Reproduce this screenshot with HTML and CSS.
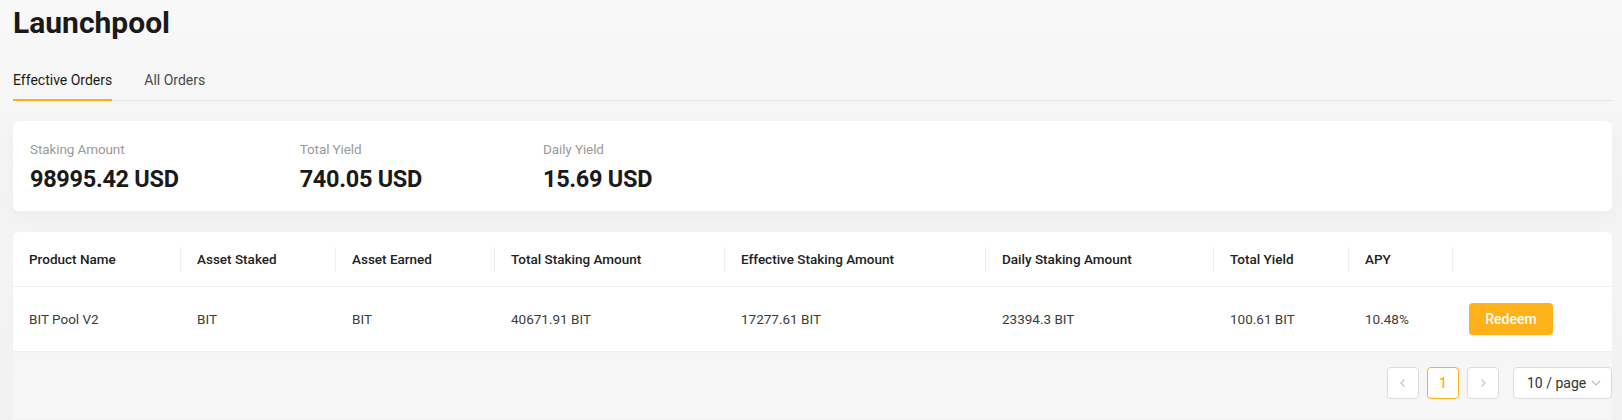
FILE: index.html
```html
<!DOCTYPE html>
<html lang="en">
<head>
<meta charset="utf-8">
<title>Launchpool</title>
<link rel="stylesheet" href="styles.css">
</head>
<body>
<div class="page">
  <h1 class="title">Launchpool</h1>
  <div class="tabs">
    <div class="tab active">Effective Orders</div>
    <div class="tab">All Orders</div>
  </div>

  <div class="summary">
    <div class="stat">
      <div class="stat-label">Staking Amount</div>
      <div class="stat-value">98995.42 USD</div>
    </div>
    <div class="stat">
      <div class="stat-label">Total Yield</div>
      <div class="stat-value">740.05 USD</div>
    </div>
    <div class="stat">
      <div class="stat-label">Daily Yield</div>
      <div class="stat-value">15.69 USD</div>
    </div>
  </div>

  <div class="orders">
    <table class="table">
      <colgroup>
        <col class="c1"><col class="c2"><col class="c3"><col class="c4"><col class="c5"><col class="c6"><col class="c7"><col class="c8"><col>
      </colgroup>
      <thead>
        <tr>
          <th>Product Name</th>
          <th>Asset Staked</th>
          <th>Asset Earned</th>
          <th>Total Staking Amount</th>
          <th>Effective Staking Amount</th>
          <th>Daily Staking Amount</th>
          <th>Total Yield</th>
          <th>APY</th>
          <th class="last"></th>
        </tr>
      </thead>
      <tbody>
        <tr>
          <td>BIT Pool V2</td>
          <td>BIT</td>
          <td>BIT</td>
          <td>40671.91 BIT</td>
          <td>17277.61 BIT</td>
          <td>23394.3 BIT</td>
          <td>100.61 BIT</td>
          <td>10.48%</td>
          <td><button class="redeem">Redeem</button></td>
        </tr>
      </tbody>
    </table>

    <div class="pagination">
      <div class="pg-btn disabled">
        <svg width="12" height="12" viewBox="0 0 12 12"><path d="M7.5 2.5 4 6l3.5 3.5" fill="none" stroke="#c4c4c4" stroke-width="1.1"/></svg>
      </div>
      <div class="pg-btn current">1</div>
      <div class="pg-btn disabled">
        <svg width="12" height="12" viewBox="0 0 12 12"><path d="M4.5 2.5 8 6 4.5 9.5" fill="none" stroke="#c4c4c4" stroke-width="1.1"/></svg>
      </div>
      <div class="pg-select">
        <span>10 / page</span>
        <svg width="12" height="12" viewBox="0 0 12 12"><path d="M2 4l4 4 4-4" fill="none" stroke="#bdbdbd" stroke-width="1.1"/></svg>
      </div>
    </div>
  </div>
</div>
</body>
</html>
```

FILE: styles.css
```css
* { box-sizing: border-box; }
html, body {
  margin: 0;
  padding: 0;
}
body {
  width: 1622px;
  height: 420px;
  overflow: hidden;
  background: linear-gradient(180deg, #f8f8f8 0%, #f4f4f4 50%, #f2f2f2 100%);
  font-family: Roboto, "Liberation Sans", Arial, sans-serif;
  color: #1e1e1e;
}
.page {
  padding: 5px 10px 0 13px;
}
.title {
  margin: 0;
  font-size: 30px;
  line-height: 36px;
  font-weight: 700;
  color: #1a1a1a;
}
.tabs {
  display: flex;
  gap: 32px;
  margin-top: 29px;
  border-bottom: 1px solid #e6e6e6;
}
.tab {
  font-size: 14px;
  line-height: 20px;
  padding-bottom: 9px;
  color: #4a4a4a;
  margin-bottom: -1px;
  border-bottom: 2px solid transparent;
}
.tab.active {
  color: #1a1a1a;
  border-bottom-color: #ffb11a;
}
.summary {
  margin-top: 20px;
  background: #fff;
  border-radius: 6px;
  padding: 18px 17px 16px;
  display: flex;
  gap: 121px;
  box-shadow: 0 6px 24px rgba(0, 0, 0, 0.035);
  height: 90px;
}
.stat-label {
  font-size: 13.5px;
  line-height: 20px;
  color: #9a9a9a;
  letter-spacing: -0.1px;
}
.stat-value {
  margin-top: 4px;
  font-size: 23.5px;
  line-height: 32px;
  font-weight: 700;
  color: #1a1a1a;
  letter-spacing: -0.3px;
}
.orders {
  margin-top: 21px;
  background: #f6f6f6;
  border-radius: 6px 6px 0 0;
  padding-bottom: 20px;
}
.table {
  width: 100%;
  border-collapse: separate;
  border-spacing: 0;
  table-layout: fixed;
  background: #fff;
  border-radius: 6px 6px 0 0;
  box-shadow: 0 1px 2px rgba(0, 0, 0, 0.04);
}
.c1 { width: 168px; }
.c2 { width: 155px; }
.c3 { width: 159px; }
.c4 { width: 230px; }
.c5 { width: 261px; }
.c6 { width: 228px; }
.c7 { width: 135px; }
.c8 { width: 104px; }
.table th {
  position: relative;
  text-align: left;
  font-weight: 500;
  font-size: 13.5px;
  line-height: 20px;
  color: #222;
  padding: 17px 16px;
  border-bottom: 1px solid #eeeeee;
}
.table th::after {
  content: "";
  position: absolute;
  right: 0;
  top: 50%;
  width: 1px;
  height: 25px;
  margin-top: -12px;
  background: #f0f0f0;
}
.table th.last::after { display: none; }
.table td {
  font-size: 13.5px;
  line-height: 20px;
  color: #3c3c3c;
  padding: 16px 16px;
  vertical-align: middle;
}
.redeem {
  display: block;
  width: 84px;
  height: 32px;
  border: none;
  border-radius: 4px;
  background: #ffb11a;
  color: #fff;
  font-family: Roboto, "Liberation Sans", Arial, sans-serif;
  font-size: 14px;
  font-weight: 500;
  box-shadow: 0 1px 2px rgba(0, 0, 0, 0.06);
  padding: 0;
}
.pagination {
  display: flex;
  justify-content: flex-end;
  align-items: center;
  gap: 8px;
  margin-top: 16px;
}
.pg-btn {
  width: 32px;
  height: 32px;
  border: 1px solid #dcdcdc;
  border-radius: 4px;
  background: #fff;
  display: flex;
  align-items: center;
  justify-content: center;
  font-size: 14px;
  font-weight: 500;
  color: #ffb11a;
}
.pg-btn.current {
  border-color: #ffb11a;
}
.pg-select {
  margin-left: 6px;
  width: 99px;
  height: 32px;
  border: 1px solid #dcdcdc;
  border-radius: 4px;
  background: #fff;
  display: flex;
  align-items: center;
  justify-content: space-between;
  padding: 0 9px 0 13px;
  font-size: 14px;
  color: #333;
}
```
